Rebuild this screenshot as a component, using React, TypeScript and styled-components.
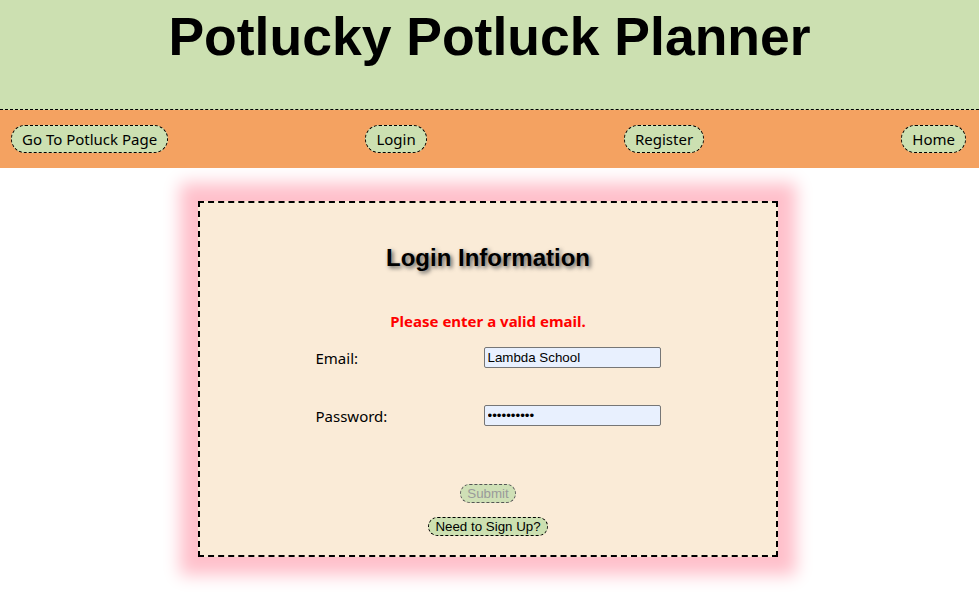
import React from "react";
import styled, { createGlobalStyle } from "styled-components";

const GlobalStyle = createGlobalStyle`
  html, body {
    margin: 0;
    padding: 0;
    background: #ffffff;
    font-family: "Noto Sans", "Open Sans", sans-serif;
  }
  * { box-sizing: border-box; }
`;

const Page = styled.div`
  width: 979px;
  min-height: 595px;
  display: flex;
  flex-direction: column;
`;

const Header = styled.header`
  height: 110px;
  background: #cce0b1;
  border-bottom: 1px dashed #000;
  display: flex;
  justify-content: center;
  align-items: flex-start;
`;

const Title = styled.h1`
  margin: 6px 0 0;
  font-family: "Liberation Sans", Arial, sans-serif;
  font-weight: 700;
  font-size: 53.5px;
  line-height: 62px;
  color: #000;
  letter-spacing: 0;
`;

const Nav = styled.nav`
  height: 58px;
  background: #f4a261;
  display: flex;
  justify-content: space-between;
  align-items: center;
  padding: 0 13px 0 11px;
`;

const NavButton = styled.button`
  height: 28px;
  padding: 0 10px;
  border: 1px dashed #000;
  border-radius: 14px;
  background: #cce0b1;
  font-family: "Noto Sans", "Open Sans", sans-serif;
  font-size: 15px;
  color: #000;
  cursor: pointer;
`;

const Main = styled.main`
  display: flex;
  justify-content: center;
  padding: 33px 3px 0 0;
`;

const Card = styled.form`
  width: 580px;
  height: 356px;
  background: #faebd7;
  border: 2px dashed #000;
  box-shadow: 0 0 16px 18px #ffc0cb;
  display: flex;
  flex-direction: column;
  align-items: center;
  padding: 41px 0 0;
`;

const CardTitle = styled.h2`
  margin: 0;
  font-family: "Liberation Sans", Arial, sans-serif;
  font-weight: 700;
  font-size: 24px;
  line-height: 28px;
  color: #000;
  text-shadow: 2px 2px 4px #555;
`;

const ErrorText = styled.p`
  margin: 39px 0 0;
  font-family: "Noto Sans", "Open Sans", sans-serif;
  font-weight: 700;
  font-size: 15px;
  line-height: 20px;
  color: #ff0000;
`;

const Row = styled.label<{ $gap: number }>`
  width: 345px;
  height: 21px;
  margin-top: ${(p) => p.$gap}px;
  display: flex;
  justify-content: space-between;
  align-items: center;
  font-family: "Noto Sans", "Open Sans", sans-serif;
  font-size: 15px;
  color: #000;
`;

const Input = styled.input`
  width: 177px;
  height: 21px;
  padding: 1px 3px;
  border: 1px solid #767676;
  border-radius: 2px;
  background: #e8f0fe;
  font-family: "Liberation Sans", Arial, sans-serif;
  font-size: 13.33px;
  color: #000;
  outline: none;
`;

const PillButton = styled.button<{ $gap: number }>`
  margin-top: ${(p) => p.$gap}px;
  height: 19px;
  padding: 0 6px;
  border: 1px dashed #000;
  border-radius: 10px;
  background: #cce0b1;
  font-family: "Liberation Sans", Arial, sans-serif;
  font-size: 13.33px;
  line-height: 17px;
  color: #000;
  cursor: pointer;
  &:disabled {
    color: #9a9a9a;
    border-color: #555;
    background: #cfe0b6;
    cursor: default;
  }
`;

export default function App() {
  return (
    <Page>
      <GlobalStyle />
      <Header>
        <Title>Potlucky Potluck Planner</Title>
      </Header>
      <Nav>
        <NavButton>Go To Potluck Page</NavButton>
        <NavButton>Login</NavButton>
        <NavButton>Register</NavButton>
        <NavButton>Home</NavButton>
      </Nav>
      <Main>
        <Card onSubmit={(e) => e.preventDefault()}>
          <CardTitle>Login Information</CardTitle>
          <ErrorText>Please enter a valid email.</ErrorText>
          <Row $gap={16}>
            <span>Email:</span>
            <Input type="text" defaultValue="Lambda School" />
          </Row>
          <Row $gap={37}>
            <span>Password:</span>
            <Input type="password" defaultValue="lambda1234" />
          </Row>
          <PillButton $gap={58} disabled>
            Submit
          </PillButton>
          <PillButton $gap={14} type="button">
            Need to Sign Up?
          </PillButton>
        </Card>
      </Main>
    </Page>
  );
}
